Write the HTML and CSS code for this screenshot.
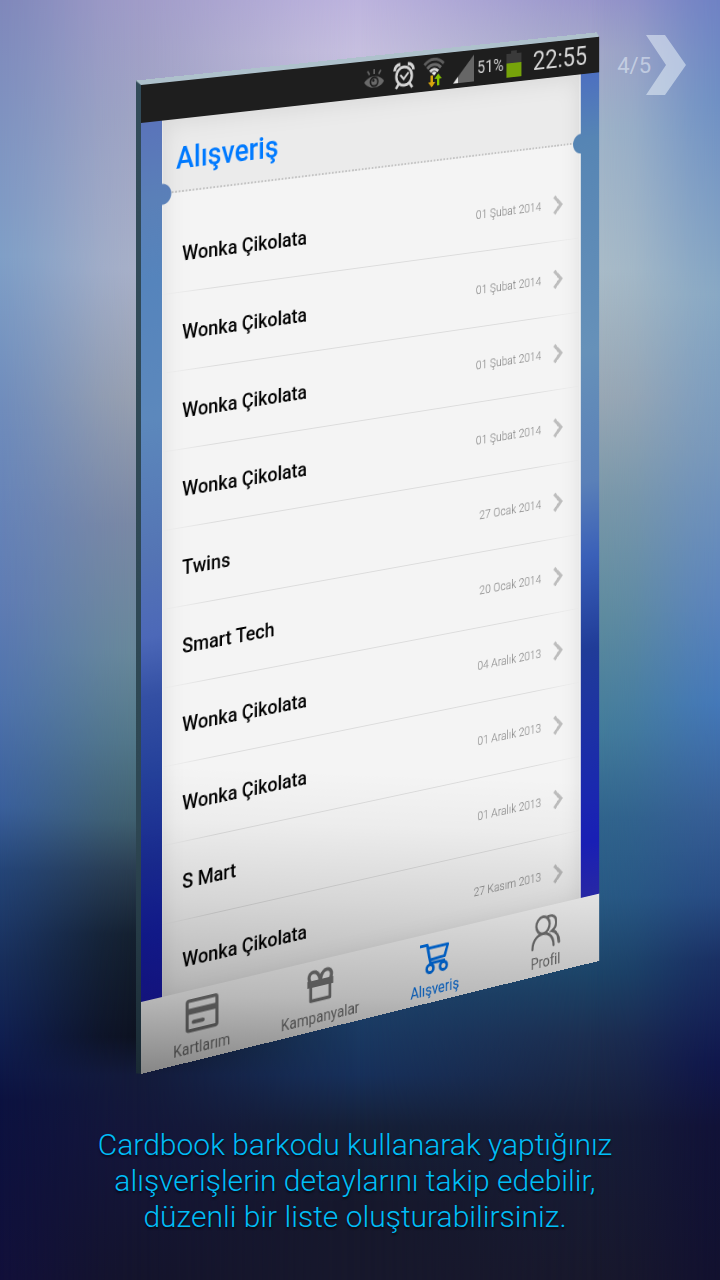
FILE: index.html
```html
<!DOCTYPE html>
<html lang="tr">
<head>
<meta charset="utf-8">
<meta name="viewport" content="width=device-width, initial-scale=1">
<title>Cardbook – Alışveriş</title>
<link rel="stylesheet" href="styles.css">
</head>
<body>
<svg class="defs" aria-hidden="true">
  <symbol id="chevron" viewBox="0 0 13 22"><path d="M2 2l8.500 9L2 20" fill="none" stroke="currentColor" stroke-width="3.600"/></symbol>
</svg>
<div class="page">
  <div class="backdrop" aria-hidden="true">
    <div class="wash wash-a"></div>
    <div class="wash wash-b"></div>
    <div class="wash wash-c"></div>
    <div class="wash wash-d"></div>
    <div class="wash wash-e"></div>
  </div>

  <a class="pager" href="#next" aria-label="Sonraki sayfa">
    <span>4/5</span>
    <svg width="40" height="60" viewBox="0 0 40 60" aria-hidden="true"><path d="M0 0h19l21 30-21 30H0l20-30z" fill="currentColor"/></svg>
  </a>

  <main class="phone">
    <div class="screen">
      <div class="status">
        <svg class="dim" width="26" height="22" viewBox="0 0 26 22"><path d="M1 14C6 6.500 20 6.500 25 14 20 22 6 22 1 14z" fill="currentColor"/><circle cx="13" cy="14" r="5.500" fill="#1e1e1e"/><circle cx="13" cy="14" r="3.600" fill="currentColor"/><circle cx="12" cy="12.500" r="1.500" fill="#1e1e1e"/><path d="M13 1v5M5 2.500l2.500 4M21 2.500l-2.500 4" stroke="currentColor" stroke-width="1.800" fill="none"/></svg>
        <svg class="alarm" width="27" height="28" viewBox="0 0 27 28"><g fill="none" stroke="currentColor"><circle cx="13.500" cy="14.500" r="9.500" stroke-width="3"/><path d="M9 13l4 4.500 6-6.500" stroke-width="2.200"/><path d="M2 8.500c0-4 3-6.500 7-6.500M25 8.500c0-4-3-6.500-7-6.500" stroke-width="3.600"/><path d="M7 22l-3.500 5M20 22l3.500 5" stroke-width="3"/></g></svg>
        <svg width="27" height="32" viewBox="0 0 27 32"><g fill="none" stroke-width="3.200"><path d="M1.500 7.500c7-7 17-7 24 0" stroke="#5d5d5d"/><path d="M5 11.500c5-5 12-5 17 0" stroke="#6a6a6a"/><path d="M8.500 15c3-3 7-3 10 0" stroke="#d9d9d9"/></g><path d="M10.500 16.500c2-1.800 4-1.800 6 0l-3 3z" fill="#eee"/><path d="M9 19h3v7h3l-4.500 5.500L6 26h3z" fill="#d9a60c"/><path d="M17 30h3v-7h3l-4.500-5.500L14 23h3z" fill="#86c400"/></svg>
        <svg class="signal" width="26" height="28" viewBox="0 0 26 28"><path d="M26 0v28H0z" fill="#666"/><path d="M6 21.500V28H0z" fill="#e6e6e6"/></svg>
        <span class="percent">51%</span>
        <svg class="battery" width="19" height="28" viewBox="0 0 19 28"><path d="M6 0h7v3h6v25H0V3h6z" fill="#3a3a3a"/><path d="M0 13h19v15H0z" fill="#76a30a"/></svg>
        <span class="clock">22:55</span>
      </div>

      <section class="card">
        <h1 class="title">Alışveriş</h1>
        <ul class="list">
          <li><a class="row" href="#1"><span class="name">Wonka Çikolata</span><time>01 Şubat 2014</time><svg class="chev"><use href="#chevron"/></svg></a></li>
          <li><a class="row" href="#2"><span class="name">Wonka Çikolata</span><time>01 Şubat 2014</time><svg class="chev"><use href="#chevron"/></svg></a></li>
          <li><a class="row" href="#3"><span class="name">Wonka Çikolata</span><time>01 Şubat 2014</time><svg class="chev"><use href="#chevron"/></svg></a></li>
          <li><a class="row" href="#4"><span class="name">Wonka Çikolata</span><time>01 Şubat 2014</time><svg class="chev"><use href="#chevron"/></svg></a></li>
          <li><a class="row" href="#5"><span class="name">Twins</span><time>27 Ocak 2014</time><svg class="chev"><use href="#chevron"/></svg></a></li>
          <li><a class="row" href="#6"><span class="name">Smart Tech</span><time>20 Ocak 2014</time><svg class="chev"><use href="#chevron"/></svg></a></li>
          <li><a class="row" href="#7"><span class="name">Wonka Çikolata</span><time>04 Aralık 2013</time><svg class="chev"><use href="#chevron"/></svg></a></li>
          <li><a class="row" href="#8"><span class="name">Wonka Çikolata</span><time>01 Aralık 2013</time><svg class="chev"><use href="#chevron"/></svg></a></li>
          <li><a class="row" href="#9"><span class="name">S Mart</span><time>01 Aralık 2013</time><svg class="chev"><use href="#chevron"/></svg></a></li>
          <li><a class="row" href="#10"><span class="name">Wonka Çikolata</span><time>27 Kasım 2013</time><svg class="chev"><use href="#chevron"/></svg></a></li>
        </ul>
      </section>

      <nav class="tabs">
        <a class="tab" href="#kartlarim">
          <svg width="38" height="34" viewBox="0 0 38 34"><rect x="1.800" y="1.800" width="34.400" height="30" rx="2" fill="none" stroke="currentColor" stroke-width="3.600"/><path d="M2 9.500h34v6H2z" fill="currentColor"/><path d="M9 23.500h11" stroke="currentColor" stroke-width="4" stroke-linecap="round"/></svg>
          Kartlarım
        </a>
        <a class="tab" href="#kampanyalar">
          <svg width="34" height="34" viewBox="0 0 34 34"><path d="M1.500 11h31v7h-31z" fill="currentColor"/><path d="M5.500 17v14.500h23V17" fill="none" stroke="currentColor" stroke-width="3.400" stroke-linejoin="round"/><path d="M17 12C16 5 12 1.500 7.500 2.500 3.500 3.500 2.500 8.500 5 12M17 12C18 5 22 1.500 26.500 2.500 30.500 3.500 31.500 8.500 29 12" fill="none" stroke="currentColor" stroke-width="3.800"/></svg>
          Kampanyalar
        </a>
        <a class="tab tab-active" href="#alisveris">
          <svg width="36" height="34" viewBox="0 0 36 34"><g fill="none" stroke="currentColor" stroke-width="3.200" stroke-linejoin="round"><path d="M0 2.500h9l4 19.500H31M10 6h24.500l-4 11.500-18.500 1"/><circle cx="12.500" cy="27.500" r="4.200"/><circle cx="29" cy="27.500" r="4.200"/></g></svg>
          Alışveriş
        </a>
        <a class="tab" href="#profil">
          <svg width="38" height="36" viewBox="0 0 38 36"><g fill="none" stroke="currentColor" stroke-width="2.900" stroke-linecap="round"><ellipse cx="15.500" cy="10.500" rx="8.500" ry="9"/><path d="M2 34C2 24 9 19.500 15.500 19.500S29 24 29 34"/><path d="M22 2.500c6-1.500 10.500 2 10.500 7.500 0 4-2.500 7-5.500 8.500 5.500 1.500 9 7 9 13.500"/></g></svg>
          Profil
        </a>
      </nav>
    </div>
  </main>

  <p class="caption">Cardbook barkodu kullanarak yaptığınız<br>alışverişlerin detaylarını takip edebilir,<br>düzenli bir liste oluşturabilirsiniz.</p>
</div>
</body>
</html>
```
FILE: styles.css
```css
* { box-sizing: border-box; }
body { margin: 0; font-family: Roboto, "Noto Sans", sans-serif; background: #15152f; }
a { color: inherit; text-decoration: none; }
svg { display: block; flex: none; }
.defs { position: absolute; width: 0; height: 0; }

.page { position: relative; display: flex; flex-direction: column; min-height: 100vh; padding-top: 84px; overflow: hidden; }

/* Backdrop: vertical washes, each faded in from the one on its left */
.backdrop, .wash { position: absolute; inset: 0; }
.wash-a { background: linear-gradient(#7f88bb 0%, #7f9fc7 20%, #6f8cbc 32%, #5f7cb4 47%, #4f73ac 55%, #3a609c 63%, #244578 68%, #182f5c 75%, #101f50 81%, #0c1240 86%, #12103a 100%); }
.wash-b { background: linear-gradient(#a09cc8 0%, #9fa4c4 9%, #a8b0c8 21%, #98a0b0 31%, #7a88a4 41%, #68889a 51%, #527788 58%, #40606f 64%, #2a3d50 68%, #14202f 73%, #0d1220 81%, #131a3a 84%, #14163a 89%, #14142c 100%); mask-image: linear-gradient(to right, transparent 0, rgba(0, 0, 0, .2) 4%, rgba(0, 0, 0, .8) 14%, #000 19%); }
.wash-c { background: linear-gradient(#bdb4de 0%, #c6bfdf 4%, #a8b0c8 20%, #56809c 60%, #1c4068 78%, #17305a 84%, #152038 88%, #16182c 94%, #17182c 100%); mask-image: linear-gradient(to right, transparent 19%, rgba(0, 0, 0, .2) 25%, rgba(0, 0, 0, .8) 42%, #000 50%); }
.wash-d { background: linear-gradient(#9896ca 0%, #a3a8c8 4%, #a0b4c8 10%, #aabcc8 21%, #9aa8b4 31%, #7a98a8 39%, #5f8c9e 48%, #437c9a 57%, #30648c 64%, #285a84 70%, #1c4468 76%, #1c2e50 81%, #161d38 88%, #18182c 100%); mask-image: linear-gradient(to right, transparent 50%, rgba(0, 0, 0, .2) 57%, rgba(0, 0, 0, .8) 76%, #000 84%); }
.wash-e { background: linear-gradient(#6f82c4 0%, #6f90c4 8%, #88a8c4 23%, #7898bc 35%, #5c84bc 47%, #4478b8 55%, #386098 63%, #284c84 70%, #1a3064 75%, #10174c 83%, #111238 88%, #12112f 100%); mask-image: linear-gradient(to right, transparent 82%, rgba(0, 0, 0, .2) 88%, rgba(0, 0, 0, .8) 96%, #000 100%); }

.pager { position: absolute; top: 35px; right: 34px; display: flex; align-items: center; color: rgba(232, 240, 248, .55); font-size: 22px; }
.pager svg { margin-left: -5px; }

/* Phone: a slab turned away on its right side */
.phone { position: relative; width: 77.4%; margin-left: 19.6%; transform-origin: 0 0; transform: perspective(3760px) skewY(-6deg) rotateY(28.3deg); color: #777; }
.phone::before { content: ""; position: absolute; inset: -4px auto 0 -6px; width: 7px; background: linear-gradient(#324b59, #2e4753 75%, #1a2a34); clip-path: polygon(0 0, 100% 4px, 100% 100%, 0 calc(100% - 2px)); }
.phone::after { content: ""; position: absolute; inset: -4px 0 auto -6px; height: 5px; background: #aec1cc; clip-path: polygon(0 0, calc(100% - 4px) 0, 100% 100%, 6px 100%); }
.screen { position: relative; display: flex; flex-direction: column;
  background:
    linear-gradient(#4d70c0 4%, #5685b4 11%, #6691b9 34%, #5a80b8 48%, #3a60b8 56%, #203c98 66%, #1a2aac 80%, #1a20bc 87%, #2c2cb8 93%) right / 50% 100% no-repeat,
    linear-gradient(#5a74ba 4%, #5a80b8 12%, #5584bc 20%, #5c88bc 34%, #5474b4 48%, #4c68b8 56%, #3450a4 62%, #24409a 70%, #1a2c98 79%, #141ea4 86%, #1a1aac 93%); }
.screen::after { content: ""; position: absolute; inset: 0; pointer-events: none; background: linear-gradient(192deg, transparent 72%, rgba(0, 0, 0, .03) 77%, rgba(0, 0, 0, .12) 84%, rgba(0, 0, 0, .27) 93%, rgba(0, 0, 0, .47)); }

.status { display: flex; align-items: center; justify-content: flex-end; height: 39px; padding-right: 16px; background: #1e1e1e; color: #d6d6d6; }
.dim { color: #6a6a6a; }
.alarm { margin: 0 10px; }
.signal { margin: 0 4px 0 10px; }
.percent { font-size: 18px; margin-right: 3px; }
.battery { margin-right: 15px; }
.clock { font-size: 28px; line-height: 39px; }

.card { position: relative; margin: 0 24px; background: #f4f4f4;
  mask: radial-gradient(circle at 0 74px, transparent 10px, #000 11px) left / 51% 100% no-repeat, radial-gradient(circle at 100% 74px, transparent 10px, #000 11px) right / 51% 100% no-repeat; }
.card::after { content: ""; position: absolute; inset: 0; pointer-events: none; box-shadow: inset 0 0 28px rgba(0, 0, 0, .1), inset 1px 0 rgba(255, 255, 255, .5), inset -2px 0 rgba(255, 255, 255, .5); }
.title { height: 74px; margin: 0; padding-left: 16px; background: #ebebeb; border-bottom: 2px dotted #c4c4c4; color: #007aff; font-size: 31px; font-weight: 500; line-height: 80px; }
.list { margin: 0; padding: 22px 0 0; list-style: none; }
.row { display: flex; align-items: center; height: 79px; padding: 0 23px; background: linear-gradient(to right, transparent, #dcdcdc 12%, #dcdcdc 88%, transparent) 0 100% / 100% 1px no-repeat; }
.name { flex: 1; color: #000; font-size: 21px; font-weight: 500; }
.row time { color: #808080; font-size: 13px; font-weight: 300; }
.chev { width: 13px; height: 22px; margin-left: 15px; color: #bdbdbd; }

.tabs { position: relative; display: grid; grid-template-columns: repeat(4, 1fr); height: 72px; margin-top: -7px; background: #fdfdfd; }
.tab { display: flex; flex-direction: column; align-items: center; justify-content: space-between; padding: 9px 0 3px; font-size: 16px; line-height: 20px; }
.tab-active { color: #0074f0; }

.caption { position: relative; margin: 53px 10px 0 0; color: #00bdf7; font-size: 30px; font-weight: 300; line-height: 36px; text-align: center; text-shadow: 0 2px 2px rgba(0, 0, 0, .6); }
```
